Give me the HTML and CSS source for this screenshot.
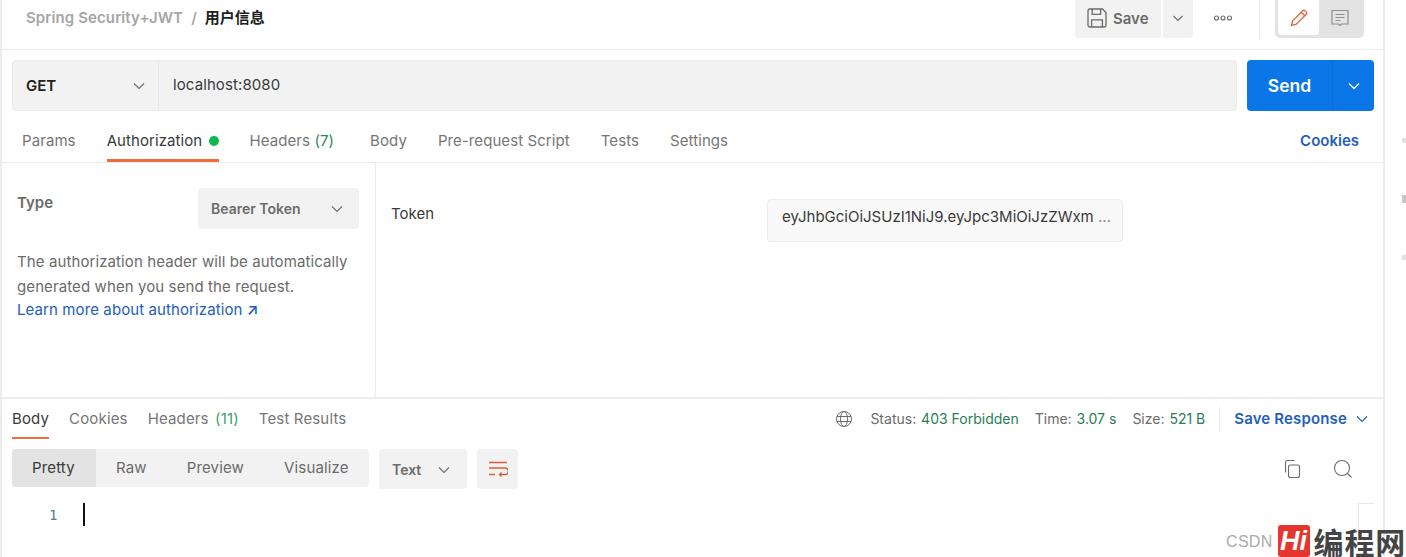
FILE: index.html
```html
<!DOCTYPE html>
<html lang="en">
<head>
<meta charset="utf-8">
<title>Spring Security+JWT / 用户信息</title>
<link rel="stylesheet" href="styles.css">
</head>
<body>
<div class="app">
  <main class="main">
    <header class="header">
      <div class="crumbs">
        <span class="crumb-parent">Spring Security+JWT</span>
        <span class="crumb-sep">/</span>
        <span class="crumb-current">用户信息</span>
      </div>
      <div class="header-actions">
        <div class="save-btn">
          <svg class="icon-save" width="24" height="24" viewBox="0 0 20 20" fill="none" stroke="#6b6b6b" stroke-width="1.100"><path d="M2.500 4a1.500 1.500 0 0 1 1.500-1.500h10.500L17.500 5.500V16a1.500 1.500 0 0 1-1.500 1.500H4A1.500 1.500 0 0 1 2.500 16z"/><path d="M6 2.500V7h7V2.500M5.500 17.500V11.500h9v6"/></svg>
          <span>Save</span>
        </div>
        <div class="save-caret">
          <svg width="12" height="12" viewBox="0 0 12 12" fill="none" stroke="#6b6b6b" stroke-width="1.100"><path d="M1.500 4l4.500 4.500L10.500 4"/></svg>
        </div>
        <div class="more">
          <svg width="20" height="6" viewBox="0 0 20 6" fill="none" stroke="#6b6b6b" stroke-width="1.100"><circle cx="3.500" cy="3" r="2"/><circle cx="10" cy="3" r="2"/><circle cx="16.500" cy="3" r="2"/></svg>
        </div>
        <div class="mode-switch">
          <div class="mode mode-on">
            <svg width="20" height="20" viewBox="0 0 20 20" fill="none" stroke="#e0643f" stroke-width="1.300"><path d="M2.500 17.500l1-4.500L13.800 2.700a1.500 1.500 0 0 1 2.100 0l1.400 1.400a1.500 1.500 0 0 1 0 2.100L7 16.500z"/><path d="M12.300 4.200l3.500 3.500"/></svg>
          </div>
          <div class="mode">
            <svg width="20" height="20" viewBox="0 0 20 20" fill="none" stroke="#8f8f8f" stroke-width="1.200"><path d="M2 2.500h16v13.500h-6.500L10 17.500 8.500 16H2z"/><path d="M5.500 6.500h9M5.500 9.500h9M5.500 12.500h5"/></svg>
          </div>
        </div>
      </div>
    </header>

    <div class="url-row">
      <div class="url-box">
        <div class="method">
          <span>GET</span>
          <svg width="12" height="12" viewBox="0 0 12 12" fill="none" stroke="#6b6b6b" stroke-width="1.100"><path d="M1 3.500l5 5 5-5"/></svg>
        </div>
        <div class="url">localhost:8080</div>
      </div>
      <div class="send">
        <span class="send-label">Send</span>
        <span class="send-caret">
          <svg width="12" height="12" viewBox="0 0 12 12" fill="none" stroke="#ffffff" stroke-width="1.300"><path d="M1 3.500l5 5 5-5"/></svg>
        </span>
      </div>
    </div>

    <nav class="req-tabs">
      <a class="tab">Params</a>
      <a class="tab tab-active">Authorization <i class="dot"></i></a>
      <a class="tab tab-headers">Headers <em class="count">(7)</em></a>
      <a class="tab">Body</a>
      <a class="tab">Pre-request Script</a>
      <a class="tab">Tests</a>
      <a class="tab">Settings</a>
      <a class="cookies">Cookies</a>
    </nav>

    <section class="auth">
      <aside class="auth-left">
        <div class="type-row">
          <span class="type-label">Type</span>
          <div class="type-select">
            <span>Bearer Token</span>
            <svg width="12" height="12" viewBox="0 0 12 12" fill="none" stroke="#6b6b6b" stroke-width="1.100"><path d="M1 3.500l5 5 5-5"/></svg>
          </div>
        </div>
        <p class="auth-desc">The authorization header will be automatically generated when you send the request.</p>
        <a class="auth-link">Learn more about authorization <span class="arrow">↗</span></a>
      </aside>
      <div class="auth-right">
        <span class="token-label">Token</span>
        <div class="token-input">eyJhbGciOiJSUzI1NiJ9.eyJpc3MiOiJzZWxm<span class="token-more"> ...</span></div>
      </div>
    </section>

    <section class="response">
      <div class="res-bar">
        <nav class="res-tabs">
          <a class="rtab rtab-active">Body</a>
          <a class="rtab">Cookies</a>
          <a class="rtab">Headers <em class="count">(11)</em></a>
          <a class="rtab">Test Results</a>
        </nav>
        <div class="res-meta">
          <svg class="globe" width="18" height="18" viewBox="0 0 18 18" fill="none" stroke="#6b6b6b" stroke-width="1"><circle cx="9" cy="9" r="7.500"/><ellipse cx="9" cy="9" rx="3.500" ry="7.500"/><path d="M2 6.500h14M2 11.500h14"/></svg>
          <span class="meta">Status: <b>403 Forbidden</b></span>
          <span class="meta">Time: <b>3.07 s</b></span>
          <span class="meta">Size: <b>521 B</b></span>
          <span class="meta-sep"></span>
          <a class="save-res">Save Response</a>
          <svg width="12" height="12" viewBox="0 0 12 12" fill="none" stroke="#2460b8" stroke-width="1.100"><path d="M1 3.500l5 5 5-5"/></svg>
        </div>
      </div>
      <div class="res-tools">
        <div class="views">
          <span class="view view-on">Pretty</span>
          <span class="view">Raw</span>
          <span class="view">Preview</span>
          <span class="view">Visualize</span>
        </div>
        <div class="format">
          <span>Text</span>
          <svg width="12" height="12" viewBox="0 0 12 12" fill="none" stroke="#6b6b6b" stroke-width="1.100"><path d="M1 3.500l5 5 5-5"/></svg>
        </div>
        <div class="wrap-btn">
          <svg width="20" height="17" viewBox="0 0 20 17" fill="none" stroke="#d9603b" stroke-width="1.400"><path d="M1 1.500h18M1 7h16a2.500 2.500 0 0 1 0 6.500h-5.500M13.500 11.500l-2 2 2 2M1 13.500h6"/></svg>
        </div>
        <div class="res-icons">
          <svg width="20" height="20" viewBox="0 0 20 20" fill="none" stroke="#6b6b6b" stroke-width="1.100"><rect x="6.500" y="6" width="11" height="12.500" rx="2"/><path d="M3.500 13.500V3.500a2 2 0 0 1 2-2h7"/></svg>
          <svg width="22" height="22" viewBox="0 0 22 22" fill="none" stroke="#6b6b6b" stroke-width="1.100"><circle cx="10" cy="10" r="7.500"/><path d="M15.500 15.500l4 4"/></svg>
        </div>
      </div>
      <div class="editor">
        <span class="line-no">1</span>
        <span class="cursor"></span>
        <span class="corner"></span>
      </div>
    </section>
  </main>
  <div class="side-strip">
    <i class="mark"></i>
    <i class="mark mark-dark"></i>
    <i class="mark"></i>
  </div>
</div>
<div class="watermark">
  <span class="wm-csdn">CSDN</span>
  <span class="wm-logo">Hi</span>
  <span class="wm-name">编程网</span>
</div>
</body>
</html>
```
FILE: styles.css
```css
* { box-sizing: border-box; }
html, body { margin: 0; height: 100%; overflow: hidden; background: #fff; }
body {
  font-family: Inter, "Noto Sans CJK SC", "Liberation Sans", sans-serif;
  font-size: 15px;
  color: #6b6b6b;
  position: relative;
}
a { display: block; }
em { font-style: normal; }
svg { display: block; flex: none; }

.app { display: flex; height: 557px; }
.main {
  width: 1385px;
  flex: none;
  display: flex;
  flex-direction: column;
  border-left: 2px solid #ececec;
  border-right: 2px solid #ececec;
}

.header {
  height: 50px;
  flex: none;
  display: flex;
  justify-content: space-between;
  border-bottom: 1px solid #ececec;
  padding: 0 19px 0 24px;
}
.crumbs { display: flex; align-items: flex-start; padding-top: 9px; gap: 8px; font-size: 15px; line-height: 18px; font-weight: 600; }
.crumb-parent { letter-spacing: .1px; }
.crumb-parent, .crumb-sep { color: #a6a6a6; }
.crumb-current { color: #212121; font-weight: 600; }

.header-actions { display: flex; align-items: flex-start; }
.save-btn {
  width: 86px; height: 38px;
  display: flex; align-items: center; gap: 4px;
  padding: 0 0 2px 10px;
  background: #f2f2f2;
  border-radius: 0 0 0 4px;
  font-weight: 600; color: #6b6b6b;
}
.save-caret {
  width: 30px; height: 38px;
  margin-left: 2px;
  padding-bottom: 2px;
  display: flex; align-items: center; justify-content: center;
  background: #f2f2f2;
  border-radius: 0 0 4px 0;
}
.more { height: 38px; width: 67px; display: flex; align-items: center; padding: 0 0 2px 20px; border-right: 1px solid #ececec; }
.mode-switch {
  width: 89px; height: 38px;
  margin-left: 15px;
  display: flex;
  padding: 0 3px 3px;
  background: #e3e3e3;
  border-radius: 0 0 5px 5px;
}
.mode { width: 41px; display: flex; align-items: center; justify-content: center; }
.mode-on { background: #fff; border-radius: 0 0 4px 4px; }

.url-row { flex: none; display: flex; gap: 10px; height: 51px; margin: 10px 9px 0 10px; }
.url-box {
  flex: 1;
  display: flex;
  background: #f2f2f2;
  border: 1px solid #ececec;
  border-radius: 4px;
}
.method {
  width: 146px;
  display: flex; align-items: center; justify-content: space-between;
  padding: 0 13px;
  border-right: 1px solid #e6e6e6;
  font-weight: 600; color: #212121;
}
.url { padding-left: 14px; line-height: 47px; color: #3a3a3a; letter-spacing: .1px; }
.send {
  width: 127px;
  display: flex;
  background: #0b76e8;
  border-radius: 4px;
  color: #fff;
}
.send-label { width: 86px; text-align: center; font-size: 17.500px; font-weight: 600; line-height: 51px; border-right: 1px solid #0a6fd9; }
.send-caret { flex: 1; display: flex; align-items: center; justify-content: center; }

.req-tabs {
  flex: none;
  height: 52px;
  display: flex;
  gap: 31px;
  padding: 0 24px 0 20px;
  border-bottom: 1px solid #ececec;
}
.tab { line-height: 60px; height: 51px; color: #767676; letter-spacing: .08px; }
.tab-active { color: #3a3a3a; border-bottom: 3px solid #f26b3a; }
.tab-headers { margin-right: 5px; }
.dot { display: inline-block; width: 10px; height: 10px; border-radius: 50%; background: #10b855; margin-left: 2px; }
.count { color: #2b8a57; }
.rtab .count { margin-left: 2px; color: #3f9f6c; }
.cookies { margin-left: auto; line-height: 60px; font-weight: 600; color: #2460b8; }

.auth { flex: none; height: 234px; display: flex; }
.auth-left { width: 374px; flex: none; padding: 25px 16px 0 15px; border-right: 1px solid #ececec; }
.type-row { display: flex; justify-content: space-between; align-items: flex-start; }
.type-label { font-weight: 600; line-height: 30px; }
.type-select {
  width: 161px; height: 41px;
  display: flex; align-items: center; justify-content: space-between;
  padding: 0 16px 0 13px;
  background: #f2f2f2;
  border-radius: 4px;
  font-size: 14px;
  font-weight: 600;
}
.auth-desc { margin: 20px 0 0; line-height: 25px; letter-spacing: .1px; }
.auth-link { color: #2460b8; line-height: 21px; letter-spacing: .1px; }
.arrow { font-size: 15px; font-weight: 600; }
.auth-right { flex: 1; display: flex; align-items: flex-start; padding: 36px 0 0 15px; }
.token-label { width: 376px; flex: none; line-height: 30px; color: #3a3a3a; }
.token-input {
  width: 356px; height: 43px;
  padding-left: 14px;
  line-height: 34px;
  background: #f9f9f9;
  border: 1px solid #ececec;
  border-radius: 4px;
  color: #3a3a3a;
  white-space: nowrap;
  overflow: hidden;
}
.token-more { color: #8a8a8a; }

.response { flex: 1; min-height: 0; border-top: 2px solid #ececec; position: relative; }
.res-bar { height: 40px; display: flex; justify-content: space-between; padding: 0 15px 0 10px; }
.res-tabs { display: flex; gap: 20px; }
.rtab { line-height: 39px; height: 40px; color: #767676; letter-spacing: .15px; }
.rtab-active { color: #3a3a3a; border-bottom: 2px solid #f26b3a; }
.res-meta { display: flex; align-items: center; gap: 16px; font-size: 14px; padding-bottom: 1px; }
.globe { margin-right: 1px; }
.meta b { font-weight: 400; color: #2b7d55; margin-left: 1px; }
.meta-sep { width: 1px; height: 24px; background: #ececec; margin: 0 -2px; }
.save-res { font-size: 15px; font-weight: 600; color: #2460b8; margin-right: -7px; letter-spacing: .15px; }

.res-tools { display: flex; align-items: flex-start; padding: 10px 29px 0 10px; }
.views {
  width: 357px; height: 38px;
  display: flex;
  background: #f2f2f2;
  border-radius: 4px;
  line-height: 37px;
  letter-spacing: .15px;
}
.view { padding: 0 20px; }
.view-on { width: 84px; background: #e3e3e3; color: #3a3a3a; border-radius: 4px 0 0 4px; }
.format {
  width: 88px; height: 40px;
  margin-left: 10px;
  display: flex; align-items: center; justify-content: space-between;
  padding: 1px 17px 0 13px;
  background: #f2f2f2;
  border-radius: 4px;
  font-size: 14px; font-weight: 600;
}
.wrap-btn {
  width: 41px; height: 40px;
  margin-left: 10px;
  display: flex; align-items: center; justify-content: center;
  background: #f2f2f2;
  border-radius: 4px;
}
.res-icons { margin-left: auto; display: flex; align-items: center; gap: 30px; height: 40px; }

.editor { position: relative; display: flex; align-items: flex-start; padding: 14px 0 0 47px; }
.line-no { font-family: "DejaVu Sans Mono", monospace; font-size: 14px; line-height: 25px; color: #4d7f96; width: 34px; flex: none; }
.cursor { width: 2px; height: 23px; background: #111; }
.corner {
  position: absolute; right: 9px; top: 14px;
  width: 16px; height: 30px;
  border-top: 1px solid #e6e6e6;
  border-left: 1px solid #e6e6e6;
}

.side-strip { flex: 1; display: flex; flex-direction: column; align-items: flex-end; padding-top: 138px; gap: 52px; }
.mark { width: 4px; height: 5px; background: #e2e2e2; }
.mark-dark { background: #c8c8c8; height: 8px; }

.watermark {
  position: absolute; right: 0; bottom: 0;
  height: 32px;
  display: flex; align-items: center;
}
.wm-csdn { font-family: "Liberation Sans", sans-serif; font-size: 16px; color: #aaa; letter-spacing: .3px; margin-right: 5px; padding-top: 1px; }
.wm-logo {
  width: 32px; height: 32px;
  background: #e5352f;
  border-radius: 3px;
  color: #fff;
  font-family: "Liberation Sans", sans-serif;
  font-size: 27px; font-weight: 700; font-style: italic;
  line-height: 32px;
  text-align: center;
}
.wm-name { font-family: "Noto Sans CJK SC", sans-serif; font-size: 30px; font-weight: 700; color: #444; line-height: 32px; margin-left: 4px; letter-spacing: .8px; white-space: nowrap; }
```
